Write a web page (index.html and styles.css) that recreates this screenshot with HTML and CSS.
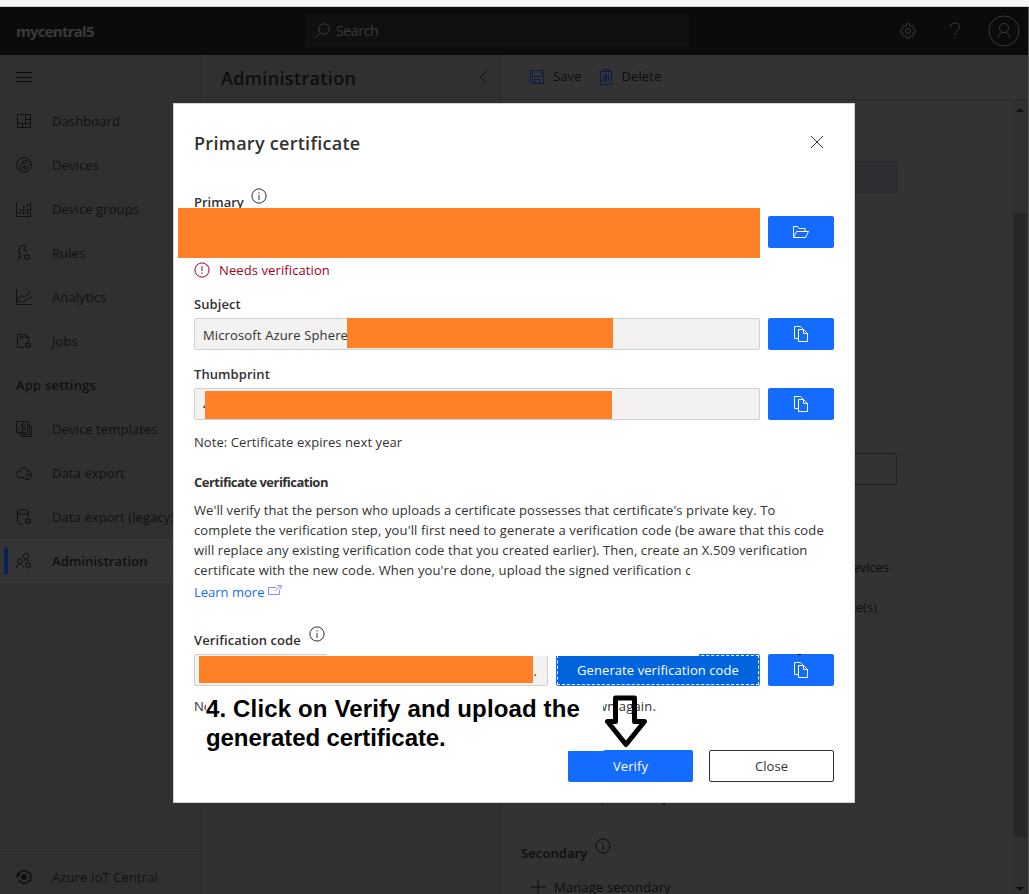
FILE: index.html
```html
<!DOCTYPE html>
<html lang="en">
<head>
<meta charset="utf-8">
<title>mycentral5 - Administration</title>
<link rel="stylesheet" href="styles.css">
</head>
<body>
<svg class="sprite" aria-hidden="true">
  <symbol id="info" viewBox="0 0 16 16"><circle cx="8" cy="8" r="7.100"/><path d="M8 7v5M8 4.200v1.300"/></symbol>
  <symbol id="copy" viewBox="0 0 16 16"><path d="M5 12.500H1.500V.5h6l2.500 2.500"/><path d="M5.500 3.500h5l4 4v8h-9zM10.500 3.500v4h4"/></symbol>
  <symbol id="gear" viewBox="0 0 16 16"><path d="M6.600.8h2.800l.4 2 1.200.5 1.700-1.100 1.300 1.300-1.100 1.700.5 1.200 2 .4v2.400l-2 .4-.5 1.200 1.100 1.700-1.300 1.300-1.700-1.100-1.200.5-.4 2H6.600l-.4-2-1.200-.5-1.700 1.100L2 12.500l1.100-1.700-.5-1.200-2-.4V6.800l2-.4.5-1.200L2 3.500l1.300-1.300L5 3.300l1.200-.5z"/><circle cx="8" cy="8" r="2.500"/></symbol>
  <symbol id="cog" viewBox="0 0 8 8"><circle cx="4" cy="4" r="2.200"/><path d="M4 .3v1.500M4 6.200v1.500M.8 2.200l1.300.7M5.900 5.100l1.300.7M.8 5.800l1.300-.7M5.900 2.900l1.300-.7"/></symbol>
</svg>
<div class="browser-edge"></div>
<div class="app">
  <header class="topbar">
    <span class="brand">mycentral5</span>
    <div class="search">
      <svg class="i16" viewBox="0 0 16 16"><circle cx="10" cy="6" r="5.200"/><path d="M6.300 9.700L.5 15.500"/></svg>
      <span>Search</span>
    </div>
    <div class="tools">
      <svg class="i16"><use href="#gear"/></svg>
      <svg class="help" viewBox="0 0 12 18"><path d="M1.500 5C1.500 2.500 3.500 1 6 1s4.500 1.500 4.500 4C10.500 8 6 8.500 6 13M6 15v1.600"/></svg>
      <svg class="avatar" viewBox="0 0 32 32"><circle cx="16" cy="16" r="15"/><circle cx="16" cy="13" r="4.500"/><path d="M10 23c0-3.500 2.500-5.500 6-5.500s6 2 6 5.500"/></svg>
    </div>
  </header>
  <div class="body">
    <nav class="nav">
      <div class="item burger"><svg class="i16" viewBox="0 0 16 16"><path d="M0 3.500h16M0 8.500h16M0 12.500h16"/></svg></div>
      <div class="item"><svg class="i16" viewBox="0 0 16 16"><path d="M1.500 1.500h13v13h-13zM9.500 1.500v9M1.500 10.500h13M9.500 6.500h5M6.500 10.500v4"/></svg><span>Dashboard</span></div>
      <div class="item"><svg class="i16" viewBox="0 0 16 16"><circle cx="8" cy="8" r="7.400"/><circle cx="8.800" cy="5" r="1.600"/><circle cx="10" cy="10.800" r="1.600"/><path d="M7.300 5.500L5 7.500 3 12.500M10.500 5l2.500-1M6 14l.5-3.500L9 9.500M11.500 10l3-3"/></svg><span>Devices</span></div>
      <div class="item"><svg class="i16" viewBox="0 0 16 16"><path d="M.5 1v14.500h14V1"/><path class="dots" d="M2.500 12h2M6.500 12h2M10.500 12h2M4 9h1.500M7 9h1.500M10.500 9h2M7 6h1.500M10.500 4h2"/></svg><span>Device groups</span></div>
      <div class="item"><svg class="i16" viewBox="0 0 16 16"><path d="M9 7l1.500-1.500H7.500L10 .5H5L2 8h3l-3.500 7L6 10.500"/><use href="#cog" x="7" y="8" width="8" height="8"/></svg><span>Rules</span></div>
      <div class="item"><svg class="i16" viewBox="0 0 16 16"><path d="M.5 0v15.500H16M1 10l4.500-3.500 3 2L15 1.500M1 11.500l5.500 2 9-5.500"/></svg><span>Analytics</span></div>
      <div class="item"><svg class="i16" viewBox="0 0 16 16"><path d="M8 14.500H1.500v-13h8l3 3V8M9.500 1.500v3h3M3.500 3.500h4M3.500 5.500h3"/><use href="#cog" x="8" y="8" width="8" height="8"/></svg><span>Jobs</span></div>
      <div class="item group">App settings</div>
      <div class="item"><svg class="i16" viewBox="0 0 16 16"><path d="M.5.5h11v11H.500zM12 3.500h1.500v10h-10V12M14 5.500h1.500v10h-10V14"/><circle cx="7" cy="4" r="1.400"/><circle cx="7.700" cy="8" r="1.400"/><path d="M6 5L3 7l-1 3.500M5 11l1.300-2"/></svg><span>Device templates</span></div>
      <div class="item"><svg class="i16" viewBox="0 0 16 16"><path d="M8 12.500H3.500a3 3 0 010-6C4 3.500 6 2.200 8 2.500c2 .2 3.500 1.800 3.800 4 2 0 3.200.8 3.700 2"/><path d="M9.500 12c.3-2 2-2.800 3.500-2.500 1 .2 1.700.8 2.200 1.500M15.300 9v2.200h-2.200M15.500 12.500c-.5 1.700-1.800 2.500-3.300 2.300-1-.1-1.700-.7-2.200-1.500M9.700 15.400v-2.200h2.200"/></svg><span>Data export</span></div>
      <div class="item"><svg class="i16" viewBox="0 0 16 16"><ellipse cx="7" cy="3" rx="5.500" ry="2.400"/><path d="M1.500 3v10c0 1.200 2 2.200 5 2.400M12.500 3v5"/><use href="#cog" x="8" y="8" width="8" height="8"/></svg><span>Data export (legacy)</span></div>
      <div class="item selected"><svg class="i16" viewBox="0 0 16 16"><circle cx="10" cy="3.300" r="2.800"/><path d="M7.500 8c.8-1.300 4-1.800 5.700 0M.5 15c0-3 1.200-4.300 3.300-4.300S7 12 7.300 15"/><circle cx="3.800" cy="8.300" r="2.400"/><use href="#cog" x="8.200" y="8.200" width="8" height="8"/></svg><span>Administration</span></div>
      <div class="item footer"><svg class="i16" viewBox="0 0 16 16"><path class="thick" d="M1.500 9V4.800L8 1.300l6.500 3.500v6.500L8 14.800 2 11.500M1.500 4.800L4 6.300"/><circle class="solid" cx="8" cy="8" r="3"/></svg><span>Azure IoT Central</span></div>
    </nav>
    <section class="subnav">
      <h2>Administration</h2>
      <svg class="i16" viewBox="0 0 16 16"><path d="M10.500 2L4.500 8l6 6"/></svg>
    </section>
    <main class="content">
      <div class="commands">
        <svg class="i16 blue" viewBox="0 0 16 16"><path d="M1.500 1.500h13v13h-12l-1-1zM3.500 1.500v6h9v-6M4.500 14.500v-4h6v4M6.500 14.500v-2"/></svg><span class="save">Save</span>
        <svg class="i16 blue" viewBox="0 0 16 16"><path d="M1.500 2.500h13M5.500 2.500v-2h5v2M2.500 2.500v13h11v-13M5.500 5v7.500M7.500 5v7.500M8.500 5v7.500M10.500 5v7.500"/></svg><span>Delete</span>
      </div>
      <div class="scroller">
        <div class="form">
          <div class="bg-field tinted"></div>
          <div class="bg-field"></div>
          <p class="tail devices">devices</p>
          <p class="tail certs">certificate(s)</p>
          <p class="behind">Expires today</p>
          <div class="secondary">Secondary <svg class="i16"><use href="#info"/></svg></div>
          <div class="manage"><svg class="i16" viewBox="0 0 16 16"><path d="M8 0v16M0 8h16"/></svg><span>Manage secondary</span></div>
        </div>
        <div class="scrollbar"><i class="up"></i><div class="thumb"></div><i class="down"></i></div>
      </div>
    </main>
  </div>
</div>

<div class="dialog">
  <div class="dialog-head">
    <h1>Primary certificate</h1>
    <svg class="close" viewBox="0 0 14 14"><path d="M1 1l12 12M13 1L1 13"/></svg>
  </div>
  <div class="label primary-label"><span>Primary</span><svg class="i16"><use href="#info"/></svg></div>
  <div class="row">
    <div class="grow"></div>
    <button class="btn icon"><svg class="folder" viewBox="0 0 18 14"><path d="M1.500 12.500v-11h4l1.500 2h6v3M1.500 12.500l3-6h12l-3 6z"/></svg></button>
  </div>
  <div class="error"><svg class="i16" viewBox="0 0 16 16"><circle cx="8" cy="8" r="7.100"/><path d="M8 4v5M8 10.500V12"/></svg><span>Needs verification</span></div>
  <div class="label subject">Subject</div>
  <div class="row">
    <div class="field grow">Microsoft Azure Sphere</div>
    <button class="btn icon"><svg class="i16"><use href="#copy"/></svg></button>
  </div>
  <div class="label thumbprint">Thumbprint</div>
  <div class="row">
    <div class="field grow">4</div>
    <button class="btn icon"><svg class="i16"><use href="#copy"/></svg></button>
  </div>
  <p class="note">Note: Certificate expires next year</p>
  <h3>Certificate verification</h3>
  <div class="para">
    <div class="p1">We'll verify that the person who uploads a certificate possesses that certificate's private key. To</div>
    <div class="p2">complete the verification step, you'll first need to generate a verification code (be aware that this code</div>
    <div class="p3">will replace any existing verification code that you created earlier). Then, create an X.509 verification</div>
    <div class="p4">certificate with the new code. When you're done, upload the signed verification c</div>
  </div>
  <a class="learn"><span>Learn more</span><svg viewBox="0 0 14 11"><path d="M8 2.500H.5v7h11V5M7.500 6L13 .5M9.500.5H13V4"/></svg></a>
  <div class="label code-label"><span>Verification code</span><svg class="i16"><use href="#info"/></svg></div>
  <div class="row">
    <div class="field code-field">.</div>
    <button class="btn generate">Generate verification code</button>
    <button class="btn icon"><svg class="i16"><use href="#copy"/></svg></button>
  </div>
  <div class="note2"><span class="note-start">No</span><span class="note-end"><span>wn again.</span></span></div>
  <div class="actions"><button class="btn">Verify</button><button class="btn outline">Close</button></div>

  <div class="erase e1"></div>
  <div class="erase e2"></div>
  <div class="tick"></div>
  <div class="redact r1"></div>
  <div class="redact r2"></div>
  <div class="redact r3"></div>
  <div class="redact r4"></div>
  <div class="callout"><div class="c1">4. Click on Verify and upload the</div><div class="c2">generated certificate.</div></div>
  <svg class="arrow" viewBox="0 0 44 54"><path d="M11.500 3h19v23.500h10L22 49.500 3.500 26.500h8z"/></svg>
</div>
</body>
</html>
```

FILE: styles.css
```css
* { box-sizing: border-box; }
html, body { margin: 0; height: 894px; overflow: hidden; }
body { font: 13px/20px "Open Sans", "Noto Sans", sans-serif; background: #303030; color: #0e0e0e; position: relative; }
h1, h2, h3, p { margin: 0; }
span, div, p { white-space: nowrap; }
svg { fill: none; stroke: currentColor; stroke-width: 1; flex: none; display: block; }
.sprite { position: absolute; width: 0; height: 0; }
.i16 { width: 16px; height: 16px; }
.browser-edge { height: 7px; background: #f7f7f7; border-bottom: 1px solid #c8cccc; }
.app { height: 887px; display: flex; flex-direction: column; border-right: 1px solid #555; }

.topbar { height: 48px; background: #0b0b0b; color: #3a3a3a; display: flex; align-items: center; }
.brand { width: 305px; padding-left: 16px; font-size: 15px; font-weight: 700; letter-spacing: -.75px; }
.search { width: 384px; height: 32px; background: #101010; border-radius: 2px; display: flex; align-items: center; padding-left: 9px; gap: 6px; font-size: 14px; letter-spacing: -.35px; }
.tools { margin-left: auto; display: flex; align-items: center; padding-right: 8px; }
.help { width: 12px; height: 18px; margin-left: 33px; }
.avatar { width: 32px; height: 32px; margin-left: 27px; }

.body { flex: 1; display: flex; min-height: 0; }
.nav { width: 201px; border-right: 1px solid #2a2a2a; display: flex; flex-direction: column; overflow: hidden; color: #101010; letter-spacing: .1px; }
.item { height: 44px; flex: none; display: flex; align-items: center; padding-left: 16px; gap: 20px; }
.burger { color: #0a0a0a; }
.group { font-weight: 600; letter-spacing: .2px; }
.dots { stroke-width: 2; }
.selected { background: #343434; font-weight: 600; position: relative; }
.selected::before { content: ""; position: absolute; left: 4px; top: 8px; width: 4px; height: 28px; border-radius: 2px; background: #05225a; }
.footer { margin-top: auto; height: 40px; border-top: 1px solid #292929; padding-top: 4px; }
.thick { stroke-width: 1.6; }
.solid { fill: currentColor; stroke: none; }

.subnav { width: 300px; border-right: 1px solid #282828; display: flex; justify-content: space-between; align-items: flex-start; padding: 0 8px 0 20px; }
.subnav h2 { font-size: 18px; font-weight: 600; line-height: 46px; letter-spacing: .35px; }
.subnav .i16 { margin-top: 14px; }
.content { flex: 1; display: flex; flex-direction: column; background: #333; min-width: 0; }
.commands { height: 45px; border-bottom: 1px solid #292929; display: flex; align-items: center; padding: 0 0 1px 28px; gap: 8px; }
.commands span { margin-top: -1px; letter-spacing: .1px; }
.commands .save { margin-right: 8px; }
.blue { color: #081b4a; }
.scroller { flex: 1; display: flex; min-height: 0; }
.form { flex: 1; padding: 61px 0 0 20px; overflow: hidden; }
.bg-field { width: 376px; height: 32px; border: 1px solid #202020; border-radius: 2px; margin-bottom: 260px; }
.bg-field.tinted { background: #2e2f33; border-color: #292a2d; }
.bg-field:nth-child(2) { margin-bottom: 72px; }
.tail { text-align: right; }
.devices { width: 368px; margin-bottom: 20px; }
.certs { width: 356px; margin-bottom: 170px; }
.behind { padding-left: 66px; margin-bottom: 36px; }
.secondary { display: flex; font-weight: 600; gap: 8px; height: 20px; margin-bottom: 14px; letter-spacing: .1px; }
.secondary .i16 { margin-top: -5px; }
.manage { display: flex; align-items: center; gap: 8px; padding-left: 9px; letter-spacing: .15px; }
.scrollbar { width: 17px; background: #303030; display: flex; flex-direction: column; align-items: center; padding: 8px 0 0 1px; }
.up { border: 4px solid transparent; border-top: 0; border-bottom-color: #111; height: 4px; width: 8px; }
.thumb { width: 13px; height: 624px; margin-top: 101px; background: #272727; }
.down { border: 4px solid transparent; border-bottom: 0; border-top-color: #0b0b0b; height: 4px; width: 8px; margin-top: 50px; }

.dialog { position: absolute; left: 173px; top: 103px; width: 682px; height: 700px; background: #fff; border: 1px solid #d2d2d2; padding: 0 20px; color: #323130; display: flex; flex-direction: column; }
.dialog-head { height: 88px; flex: none; display: flex; justify-content: space-between; padding-top: 26px; }
h1 { font-size: 18px; font-weight: 600; line-height: 26px; letter-spacing: .28px; }
.close { width: 14px; height: 14px; margin: 5px 10px 0 0; }
.label { font-weight: 600; flex: none; height: 20px; display: flex; gap: 8px; letter-spacing: .08px; }
.label .i16 { margin-top: -4px; }
.primary-label { margin-bottom: 4px; letter-spacing: 0; gap: 7px; }
.row { display: flex; gap: 8px; height: 32px; flex: none; }
.grow { flex: 1; }
.field { height: 32px; border: 1px solid #d2d0ce; border-radius: 2px; background: #f3f2f1; padding: 0 8px; line-height: 32px; letter-spacing: .14px; }
.btn { height: 32px; width: 125px; background: #136bff; border: 0; border-radius: 2px; color: #fff; font: 13px/20px "Open Sans", sans-serif; letter-spacing: .08px; padding: 0; display: flex; align-items: center; justify-content: center; white-space: nowrap; }
.btn.icon { width: 66px; }
.folder { width: 18px; height: 14px; }
.error { color: #a4001d; display: flex; align-items: center; gap: 9px; height: 20px; margin-top: 12px; flex: none; letter-spacing: .1px; }
.subject { margin: 14px 0 4px; }
.thumbprint { margin: 14px 0 4px; }
.note { margin-top: 12px; height: 20px; letter-spacing: .08px; }
h3 { font-size: 13px; line-height: 20px; font-weight: 700; letter-spacing: -.52px; margin: 20px 0 8px; }
.para { height: 80px; flex: none; }
.p1 { letter-spacing: .08px; }
.p2 { letter-spacing: .135px; }
.p3 { letter-spacing: .1px; }
.p4 { letter-spacing: .13px; width: 496px; overflow: hidden; }
.learn { display: flex; color: #136bff; gap: 4px; height: 20px; margin-top: 2px; }
.learn svg { width: 14px; height: 11px; margin-top: 3px; color: #8f86f5; }
.code-label { margin: 28px 0 4px; }
.code-field { width: 354px; text-align: right; padding-right: 10px; }
.generate { width: 204px; background: #0064dc; outline: 1px dashed #fff; outline-offset: -2px; border: 1px solid #136bff; }
.note2 { display: flex; height: 20px; margin-top: 10px; flex: none; }
.note-start { width: 12px; overflow: hidden; }
.note-end { margin-left: 397px; overflow: hidden; width: 60px; display: flex; letter-spacing: .15px; }
.note-end span { margin-left: -6px; }
.actions { display: flex; justify-content: flex-end; gap: 16px; margin-top: 34px; flex: none; }
.btn.outline { background: #fff; border: 1px solid #323130; color: #323130; }

/* annotations drawn over the dialog */
.erase { position: absolute; background: #fff; }
.e1 { left: 153px; top: 549px; width: 372px; height: 3px; }
.e2 { left: 394px; top: 645px; width: 36px; height: 2px; }
.tick { position: absolute; left: 624px; top: 550px; width: 3px; height: 1px; background: #000; }
.redact { position: absolute; background: #ff8027; }
.r1 { left: 4px; top: 104px; width: 582px; height: 50px; }
.r2 { left: 173px; top: 214px; width: 266px; height: 30px; }
.r3 { left: 31px; top: 287px; width: 407px; height: 28px; }
.r4 { left: 25px; top: 552px; width: 334px; height: 27px; }
.callout { position: absolute; left: 32px; top: 590px; color: #000; font: bold 24px/29px "Liberation Sans", Arial, sans-serif; }
.c1 { letter-spacing: .14px; }
.c2 { letter-spacing: -.08px; }
.arrow { position: absolute; left: 430px; top: 591px; width: 44px; height: 54px; }
.arrow path { stroke: #000; stroke-width: 5; stroke-linejoin: round; }
```
